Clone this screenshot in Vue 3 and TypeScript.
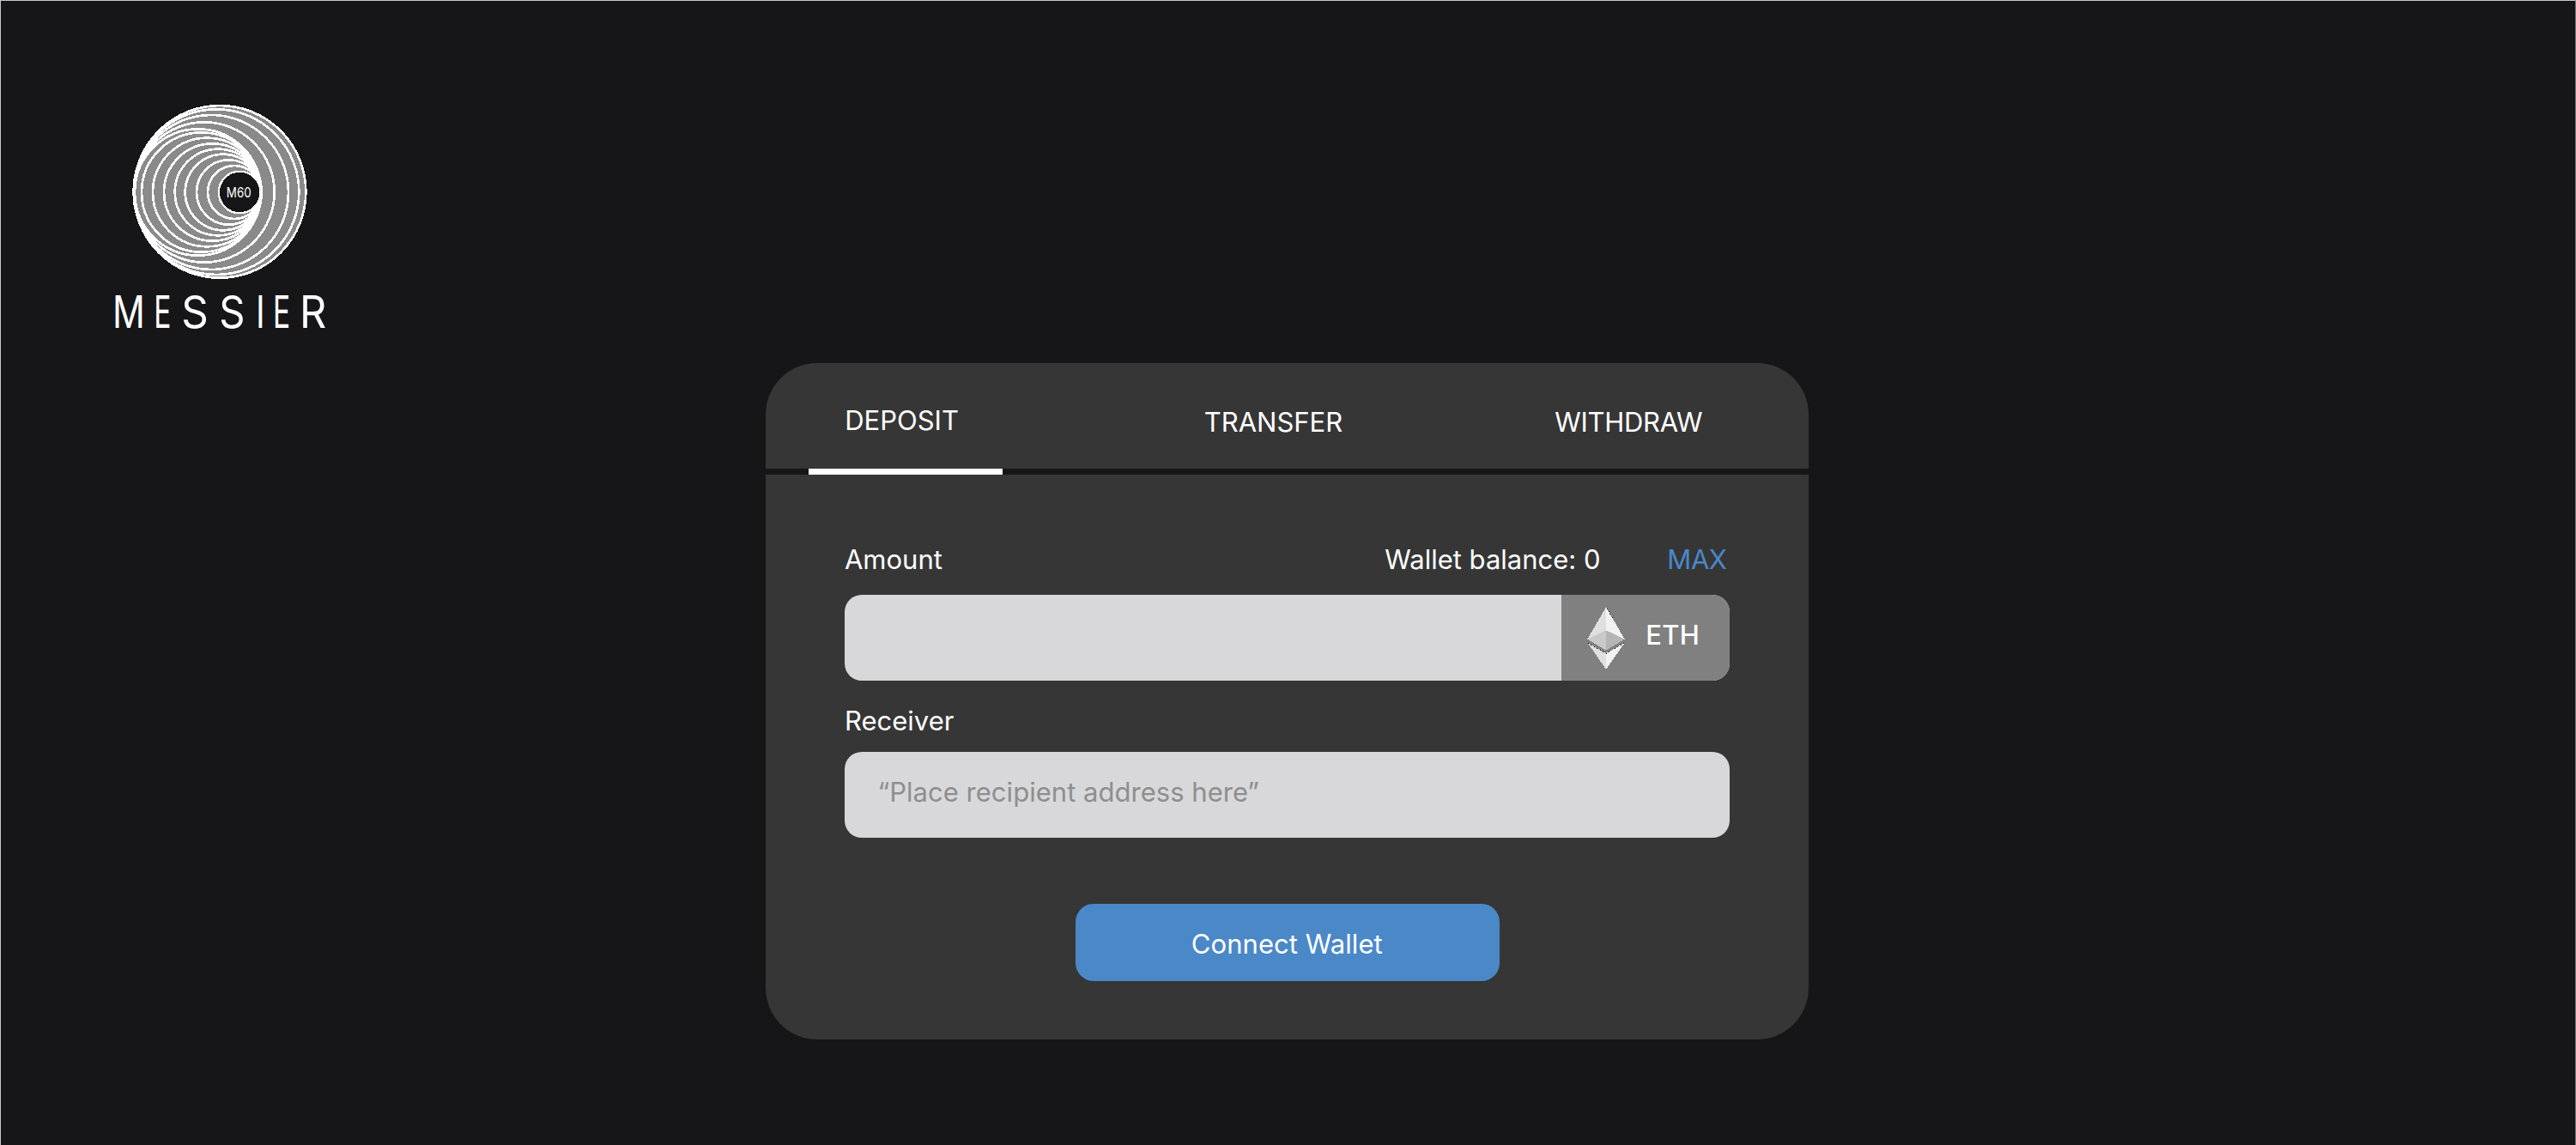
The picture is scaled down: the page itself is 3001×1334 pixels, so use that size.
<script setup lang="ts">
interface Ring { cx: number; cy: number; r: number }
interface Glyph { ch: string; x: number; sx: number }

// Outer rings share the left edge of the disc, inner rings share the right edge of the core.
const rings: Ring[] = [
  { cx: 408, cy: 340, r: 301 },
  { cx: 396, cy: 341, r: 289 },
  { cx: 378, cy: 342, r: 270 },
  { cx: 354, cy: 342, r: 245 },
  { cx: 332, cy: 342, r: 221 },
  { cx: 344, cy: 342, r: 209 },
  { cx: 364, cy: 342, r: 190 },
  { cx: 383, cy: 342, r: 170 },
  { cx: 402, cy: 342, r: 151 },
  { cx: 420, cy: 342, r: 133 },
  { cx: 440, cy: 342, r: 113 },
  { cx: 459, cy: 342, r: 93 },
]

const wordmark: Glyph[] = [
  { ch: 'M', x: 33, sx: 0.8 },
  { ch: 'E', x: 178, sx: 0.64 },
  { ch: 'S', x: 274, sx: 0.94 },
  { ch: 'S', x: 406, sx: 0.9 },
  { ch: 'I', x: 534, sx: 0.76 },
  { ch: 'E', x: 594, sx: 0.64 },
  { ch: 'R', x: 687, sx: 0.93 },
]
</script>

<template>
  <main class="page">
    <header class="top">
      <svg class="logo" viewBox="0 0 810 900" role="img" aria-label="Messier M60">
        <g shape-rendering="crispEdges">
          <circle cx="408" cy="340" r="303" fill="#8a8a8a" />
          <circle
            v-for="(ring, i) in rings"
            :key="i"
            :cx="ring.cx"
            :cy="ring.cy"
            :r="ring.r"
            fill="none"
            stroke="#fff"
            stroke-width="8"
          />
          <circle cx="477.5" cy="342" r="73" fill="#161618" stroke="#fff" stroke-width="7" />
        </g>
        <text class="core" transform="translate(431.5 360) scale(0.82 1)">M60</text>
        <text
          v-for="(g, i) in wordmark"
          :key="'g' + i"
          class="word"
          :transform="`translate(${g.x} 816) scale(${g.sx} 1)`"
        >{{ g.ch }}</text>
      </svg>
    </header>

    <section class="card">
      <nav class="tabs">
        <a class="tab active">DEPOSIT</a>
        <a class="tab transfer">TRANSFER</a>
        <a class="tab withdraw">WITHDRAW</a>
      </nav>

      <form class="form">
        <div class="row">
          <span class="label">Amount</span>
          <span class="balance">Wallet balance: 0</span>
          <span class="max">MAX</span>
        </div>
        <div class="field amount">
          <div class="token">
            <svg class="eth" viewBox="0 0 132 220">
              <g shape-rendering="crispEdges">
                <path d="M66 1 1 113 66 82Z" fill="#dfdfe0" />
                <path d="M66 1 131 113 66 82Z" fill="#f2f2f2" />
                <path d="M66 82 1 113 66 152Z" fill="#c9c9cb" />
                <path d="M66 82 131 113 66 152Z" fill="#b4b5b7" />
                <path d="M2 126 66 163V219Z" fill="#dfdfe0" />
                <path d="M131 126 66 163V219Z" fill="#f2f2f2" />
                <path
                  d="M3 127 66 164 129 127M68 5 90 40"
                  fill="none"
                  stroke="#111"
                  stroke-width="3"
                  stroke-dasharray="3 9"
                />
              </g>
            </svg>
            <span class="symbol">ETH</span>
          </div>
        </div>
        <label class="label receiver">Receiver</label>
        <div class="field address">“Place recipient address here”</div>
        <button class="connect" type="button">Connect Wallet</button>
      </form>
    </section>
  </main>
</template>

<style>
html,
body {
  margin: 0;
  background: #161618;
}
</style>

<style scoped>
.page {
  box-sizing: border-box;
  width: 3001px;
  height: 1334px;
  overflow: hidden;
  border: 1px solid #c3c8c6;
  border-right-color: #777775;
  border-bottom: 0;
  background: #161618;
  color: #fff;
  font: 400 31px/40px Inter, sans-serif;
}
.top {
  box-sizing: border-box;
  height: 422.3px;
  padding: 109px 0 0 119px;
}
.logo {
  display: block;
  width: 270px;
  height: 300px;
  overflow: visible;
}
.core {
  fill: #fff;
  font: 400 49px Inter, sans-serif;
}
.word {
  fill: #fff;
  font: 400 157px Inter, sans-serif;
}
.card {
  width: 1215px;
  height: 788px;
  margin-left: 891.2px;
  border-radius: 60px;
  background: #363636;
}
.tabs {
  display: flex;
  box-sizing: border-box;
  height: 130px;
  padding-left: 50px;
  background: linear-gradient(#161617, #161617) 0 123px / 100% 7px no-repeat;
}
.tab {
  box-sizing: border-box;
  padding-top: 49px;
  white-space: nowrap;
}
.active {
  width: 226px;
  padding: 47px 0 0 42px;
  border-bottom: 7px solid #fff;
}
.transfer {
  width: 408.5px;
  margin-left: 234.5px;
}
.withdraw {
  letter-spacing: -0.3px;
}
.form {
  width: 1031.3px;
  margin-left: 91.8px;
  padding-top: 79px;
}
.row {
  display: flex;
  margin-bottom: 21px;
}
.label {
  display: block;
}
.balance {
  margin-left: auto;
  width: 329px;
}
.max {
  width: 73px;
  color: #4b88c8;
  letter-spacing: -0.4px;
}
.field {
  box-sizing: border-box;
  display: flex;
  height: 100px;
  overflow: hidden;
  border-radius: 20px;
  background: #d8d8da;
}
.token {
  box-sizing: border-box;
  display: flex;
  width: 196.5px;
  margin-left: auto;
  padding-left: 30.2px;
  background: #808080;
}
.eth {
  width: 44px;
  height: 73.3px;
  margin-top: 14px;
}
.symbol {
  margin: 27px 0 0 24.3px;
  font-weight: 500;
  letter-spacing: 0.3px;
}
.receiver {
  margin: 27px 0 16px;
}
.address {
  padding: 27px 0 0 38.5px;
  color: #8e8e8e;
  letter-spacing: 0.03px;
}
.connect {
  display: block;
  width: 494px;
  height: 90.3px;
  margin: 76.8px 0 0 268.8px;
  padding: 3px 1px 0 0;
  border: 0;
  border-radius: 21px;
  background: #4b88c8;
  color: #fff;
  font: inherit;
  letter-spacing: 0.06px;
}
</style>
